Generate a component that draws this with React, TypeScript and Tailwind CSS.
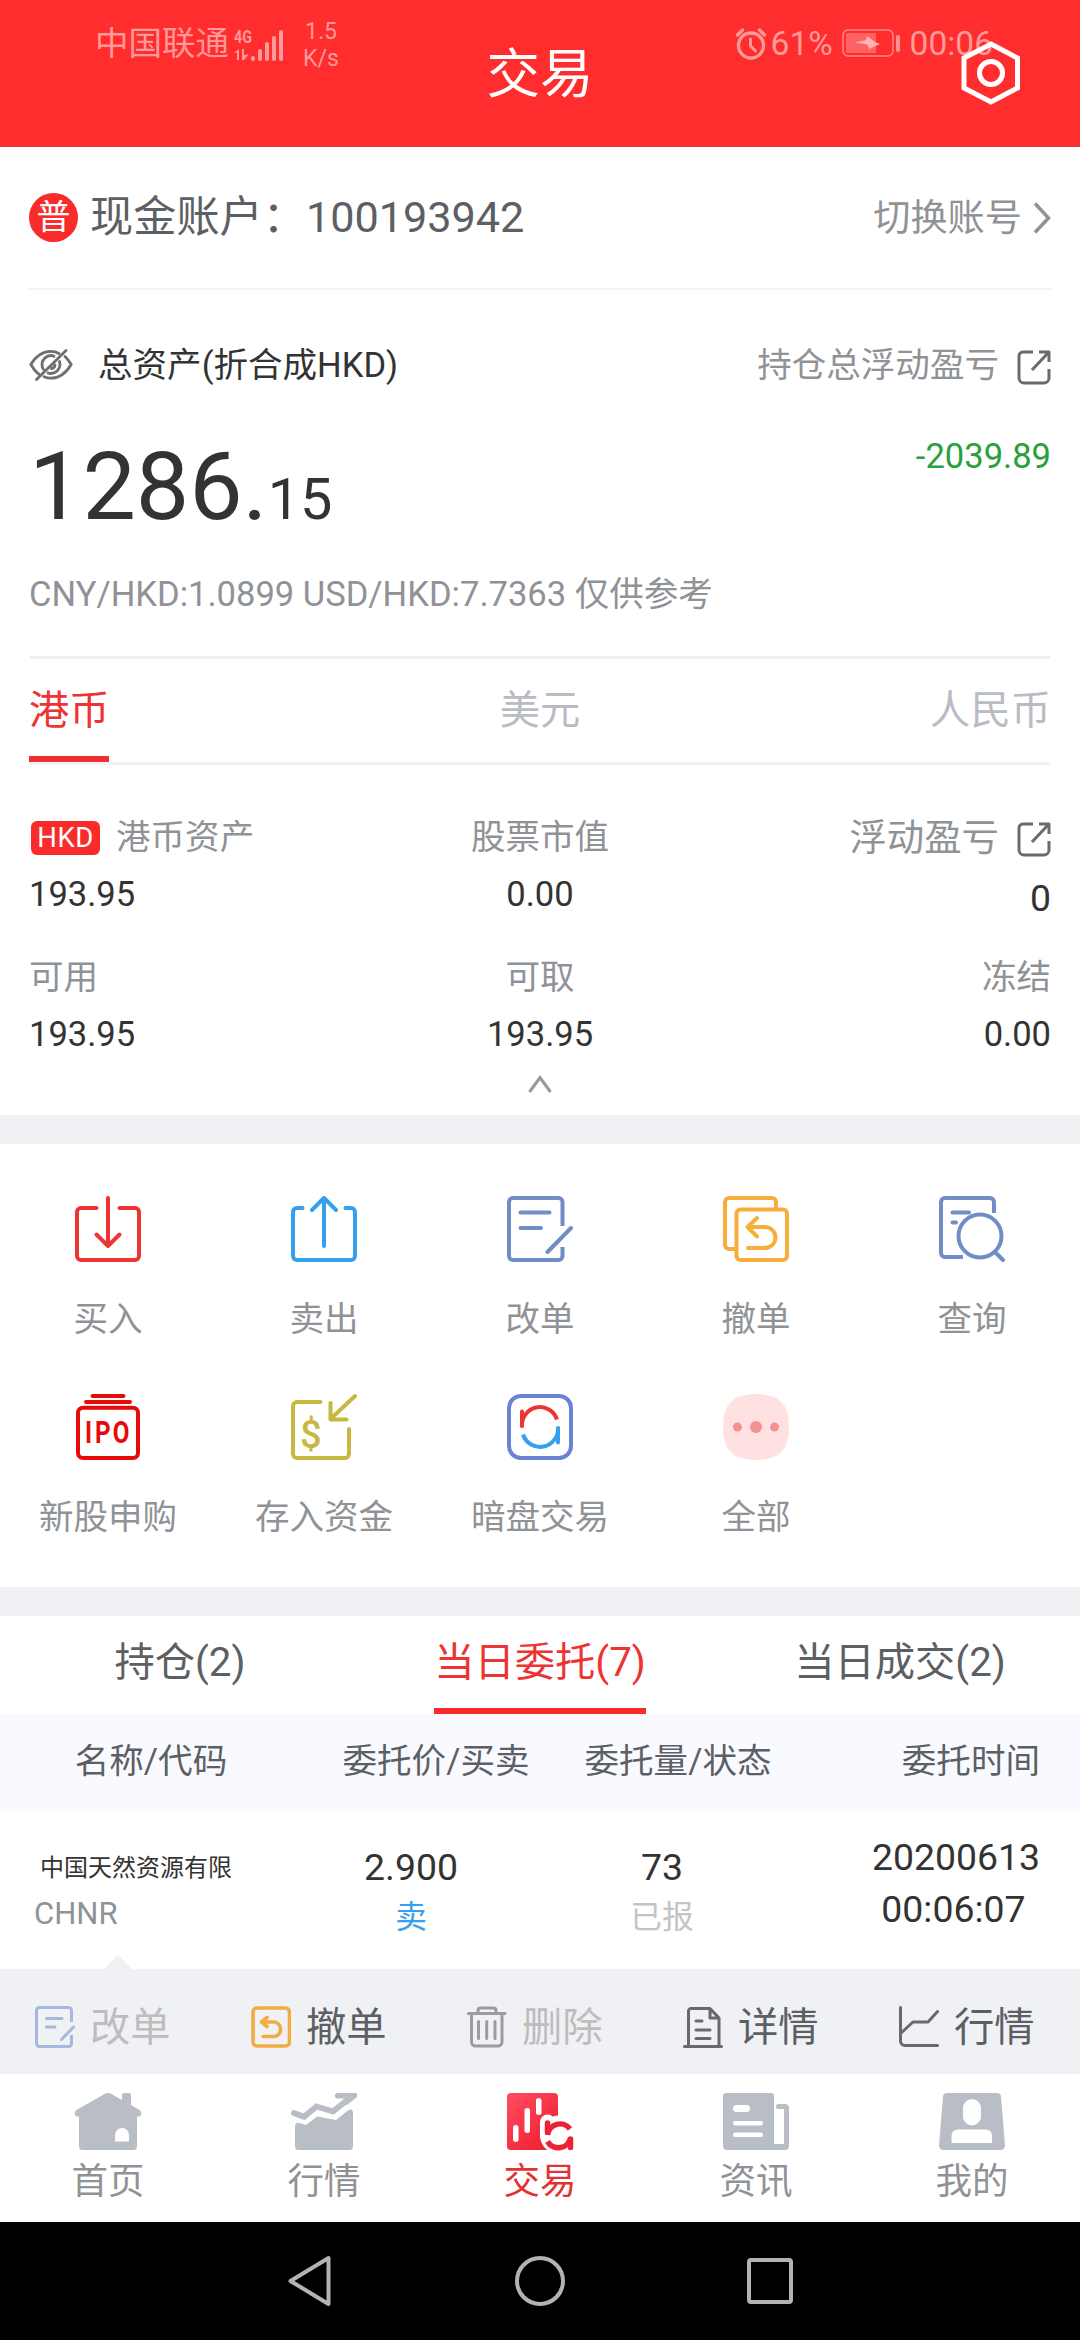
import { useState } from "react";
import type { ReactNode } from "react";

/* ---------- small icons ---------- */

function ShareIcon() {
  return (
    <svg width="34" height="35" viewBox="0 0 34 35" fill="none" stroke="#6b6b6b" strokeWidth="3">
      <path d="M16 2H6a4 4 0 0 0-4 4v22a5 5 0 0 0 5 5h20a5 5 0 0 0 5-5V19" />
      <path d="M22 2h10v10M31.500 2.500 15 20" strokeLinejoin="round" />
    </svg>
  );
}

function EyeOffIcon() {
  return (
    <svg width="44" height="32" viewBox="0 0 44 32" fill="none" stroke="#6f6f6f" strokeWidth="2.800" strokeLinecap="round">
      <path d="M30 4.500C27.500 3 25 2.300 22 2.300 13 2.300 6 8.500 1.800 15.500c2.200 4 5 7.300 8.200 9.800" />
      <path d="M15 27.800c2.200.900 4.500 1.400 7 1.400 9 0 16-6.700 20.200-13.700-1.700-3-3.800-5.700-6.200-8" />
      <path d="M37 1.500 7.500 30.500" />
      <path d="M25 7.300c-1-.500-2-.800-3-.800a9 9 0 0 0-9 9c0 1.900.500 3.500 1.400 4.800" />
      <path d="M19 24c1 .400 2 .500 3 .500a9 9 0 0 0 9-9c0-1-.200-2-.500-3" />
      <path d="M22.500 19.500a4 4 0 0 0 3.500-3.500" />
    </svg>
  );
}

function SignalIcon() {
  return (
    <svg width="52" height="40" viewBox="0 -4 52 40" fill="#ff9a9a" className="overflow-visible">
      <text x="0" y="15" fontSize="18" fontWeight="700" textLength="18" lengthAdjust="spacingAndGlyphs">
        4G
      </text>
      <path d="M5 21v11H3v-7H0zM8 21h2v6l5-1-5 6H8z" />
      <rect x="17" y="28" width="4" height="5" rx="2" />
      <rect x="24" y="21" width="4" height="12" rx="2" />
      <rect x="31" y="14" width="4" height="19" rx="2" />
      <rect x="38" y="8" width="4" height="25" rx="2" />
      <rect x="45" y="2" width="4" height="31" rx="2" />
    </svg>
  );
}

function AlarmIcon() {
  return (
    <svg width="32" height="34" viewBox="0 0 32 34" fill="none" stroke="#ff9a9a" strokeLinecap="round">
      <circle cx="16" cy="18.500" r="12.500" strokeWidth="3.400" />
      <path d="M15.500 12v7l5 5" strokeWidth="3" />
      <path d="M2.500 8 7.500 3M29.500 8l-5-5" strokeWidth="3.400" />
    </svg>
  );
}

function BatteryIcon() {
  return (
    <svg width="60" height="28" viewBox="0 0 60 28">
      <rect x="1" y="1" width="50" height="26" rx="5" fill="none" stroke="#ff8a8a" strokeWidth="1.500" />
      <rect x="4" y="4" width="30" height="20" fill="#ff6262" />
      <path d="M13 13.500 24 11l1-4 8 6 5 2-11 5-1.500-4.500z" fill="#ffb4b4" />
      <rect x="54" y="6" width="4" height="17" rx="2" fill="#ff8f8f" />
    </svg>
  );
}

/* ---------- menu icons ---------- */

function Icon({ color, children }: { color: string; children: ReactNode }) {
  return (
    <svg
      width="66"
      height="66"
      viewBox="0 0 66 66"
      fill="none"
      stroke={color}
      strokeWidth="4"
      strokeLinecap="round"
      strokeLinejoin="round"
    >
      {children}
    </svg>
  );
}

const BuyIcon = (
  <Icon color="#ee3333">
    <path d="M21.500 12H6a4 4 0 0 0-4 4v44a4 4 0 0 0 4 4h54a4 4 0 0 0 4-4V16a4 4 0 0 0-4-4H44.500" />
    <path d="M33 2v48M21.500 38.500 33 50l11.500-11.500" />
  </Icon>
);

const SellIcon = (
  <Icon color="#36a0ee">
    <path d="M11.500 12H6a4 4 0 0 0-4 4v44a4 4 0 0 0 4 4h54a4 4 0 0 0 4-4V16a4 4 0 0 0-4-4h-5.500" />
    <path d="M33 50V2M21 14 33 2l12 12" />
  </Icon>
);

const EditIcon = (
  <Icon color="#718dc6">
    <path d="M55.500 30V6a4 4 0 0 0-4-4H6a4 4 0 0 0-4 4v54a4 4 0 0 0 4 4h45.500a4 4 0 0 0 4-4v-9" strokeLinecap="butt" />
    <path d="M13.500 16.500h29M13.500 32H34M64 32 40.500 56" />
  </Icon>
);

const CancelIcon = (
  <Icon color="#f7ad3b">
    <path d="M12 53H6a4 4 0 0 1-4-4V6a4 4 0 0 1 4-4h43a4 4 0 0 1 4 4v6" strokeLinecap="butt" />
    <rect x="13.500" y="13.500" width="50.500" height="50.500" rx="4" />
    <path d="M34 22 24.500 31 34 40.500M25 31h17a10.500 10.500 0 0 1 0 21H25" />
  </Icon>
);

const QueryIcon = (
  <Icon color="#718dc6">
    <path d="M55 17V6a4 4 0 0 0-4-4H6a4 4 0 0 0-4 4v51a4 4 0 0 0 4 4h18" strokeLinecap="butt" />
    <circle cx="41" cy="40" r="21.500" />
    <path d="M57 57l7 7M13.500 16.500H30M13.500 26.500H17" />
  </Icon>
);

const IpoIcon = (
  <Icon color="#e60b0b">
    <path d="M17.500 2h31M11 8h44" />
    <rect x="3" y="13.700" width="60" height="50.300" rx="5" />
    <text x="12.800 25.600 48.300" y="49" fontSize="31" fontWeight="700" fill="#e60b0b" stroke="none" transform="scale(0.78 1)">
      IPO
    </text>
  </Icon>
);

const DepositIcon = (
  <Icon color="#c7b842">
    <path d="M29.500 8H6a4 4 0 0 0-4 4v48a4 4 0 0 0 4 4h48a4 4 0 0 0 4-4V35" />
    <path d="M64 2 39.500 25M39.500 9v16.500H55.500" />
    <text x="9" y="54" fontSize="38" fontWeight="500" fill="#c7b842" stroke="none">
      $
    </text>
  </Icon>
);

const DarkPoolIcon = (
  <Icon color="#6a83d4">
    <rect x="2" y="2" width="62" height="62" rx="12" />
    <path d="M15 17.500V32" stroke="#ee3333" />
    <path d="M15 33a18 18 0 0 1 35-7.500" stroke="#ee3333" strokeLinecap="butt" />
    <path d="M51 34v14.500" stroke="#36a0ee" />
    <path d="M51 33a18 18 0 0 1-35 7.500" stroke="#36a0ee" strokeLinecap="butt" />
  </Icon>
);

const AllIcon = (
  <svg width="66" height="66" viewBox="0 0 66 66">
    <path d="M33 0c22 0 33 9 33 33S55 66 33 66 0 57 0 33 11 0 33 0z" fill="#ffe1e1" />
    <g fill="#f59191">
      <circle cx="14.500" cy="33" r="4.500" />
      <circle cx="33" cy="33" r="6" />
      <circle cx="51.500" cy="33" r="4.500" />
    </g>
  </svg>
);

const menu = [
  { label: "买入", icon: BuyIcon },
  { label: "卖出", icon: SellIcon },
  { label: "改单", icon: EditIcon },
  { label: "撤单", icon: CancelIcon },
  { label: "查询", icon: QueryIcon },
  { label: "新股申购", icon: IpoIcon },
  { label: "存入资金", icon: DepositIcon },
  { label: "暗盘交易", icon: DarkPoolIcon },
  { label: "全部", icon: AllIcon },
];

/* ---------- order action icons ---------- */

function ActionIcon({ color, children }: { color: string; children: ReactNode }) {
  return (
    <svg
      width="40"
      height="42"
      viewBox="0 0 40 42"
      fill="none"
      stroke={color}
      strokeWidth="3"
      strokeLinecap="round"
      strokeLinejoin="round"
    >
      {children}
    </svg>
  );
}

const actions = [
  {
    label: "改单",
    disabled: true,
    icon: (
      <ActionIcon color="#a6b8dd">
        <path d="M36.500 16V4.500a3 3 0 0 0-3-3h-29a3 3 0 0 0-3 3v33a3 3 0 0 0 3 3h29a3 3 0 0 0 3-3V29" strokeLinecap="butt" />
        <path d="M11.500 12.500H27M11.500 21h8.500M38.500 21 26.500 33.500" />
      </ActionIcon>
    ),
  },
  {
    label: "撤单",
    disabled: false,
    icon: (
      <ActionIcon color="#f1ad45">
        <rect x="2" y="2" width="36.500" height="38" rx="4" strokeWidth="3.600" />
        <path d="M16 11.500 10.500 16 16 20.500M11 16h13a7.500 7.500 0 0 1 0 14.500H12" strokeWidth="3.600" />
      </ActionIcon>
    ),
  },
  {
    label: "删除",
    disabled: true,
    icon: (
      <ActionIcon color="#9c9c9c">
        <path d="M1.500 7.500h36.500M11 7V4.500a2.500 2.500 0 0 1 2.500-2.500h13A2.500 2.500 0 0 1 29 4.500V7" />
        <path d="M4.500 8v28a4 4 0 0 0 4 4h22.500a4 4 0 0 0 4-4V8M11.500 15.500v17M19.700 15.500v17M28 15.500v17" />
      </ActionIcon>
    ),
  },
  {
    label: "详情",
    disabled: false,
    icon: (
      <ActionIcon color="#696969">
        <path d="M1.500 40.500h37M5.500 40V5a2.500 2.500 0 0 1 2.500-2.500h19L36 12v28M27 3v9h8.500M13 15h6M13 24h14M13 32.500h14" />
      </ActionIcon>
    ),
  },
  {
    label: "行情",
    disabled: false,
    icon: (
      <ActionIcon color="#696969">
        <path d="M1.500 1.500V35a4.500 4.500 0 0 0 4.500 4.500h32.500M2 27l12-11h15L38.500 5.500" />
      </ActionIcon>
    ),
  },
];

/* ---------- bottom bar icons ---------- */

const tabs = [
  {
    label: "首页",
    icon: (
      <svg width="66" height="57" viewBox="0 0 66 57" fill="#b9bdc5">
        <path d="M29.500 1a7 7 0 0 1 7 0L47 7V2a2 2 0 0 1 2-2h5a2 2 0 0 1 2 2v10l8.500 5a3 3 0 0 1 1.500 2.500V21a2.500 2.500 0 0 1-2.500 2.500H62V53.500a3.500 3.500 0 0 1-3.500 3.500h-51A3.500 3.500 0 0 1 4 53.500v-30H2.500A2.500 2.500 0 0 1 0 21v-1.500A3 3 0 0 1 1.500 17z" />
        <path d="M40 48.500V42a7 7 0 0 1 14 0v6.500z" fill="#fff" />
      </svg>
    ),
  },
  {
    label: "行情",
    icon: (
      <svg width="66" height="57" viewBox="0 0 66 57" fill="#b9bdc5">
        <path d="M3 20l10 3.800L25.500 13.500 42 18.500 60 4" fill="none" stroke="#b9bdc5" strokeWidth="6" strokeLinecap="round" />
        <path d="M46 0h20v4L56 12l-5-2 4-4.500H46A2.800 2.800 0 0 1 46 0z" />
        <path d="M4 33a3 3 0 0 1 4-3l7 2 11-8.500 19 3.500 12.500-10q4.500-2 4.500 3V53.500a3.500 3.500 0 0 1-3.500 3.500h-51A3.500 3.500 0 0 1 4 53.500z" />
      </svg>
    ),
  },
  {
    label: "交易",
    icon: (
      <svg width="66" height="57" viewBox="0 0 66 57" className="overflow-visible">
        <defs>
          <linearGradient id="tradeFill" x1="0" y1="0" x2="0.800" y2="1">
            <stop offset="0" stopColor="#ff4d62" />
            <stop offset="1" stopColor="#f01f2e" />
          </linearGradient>
        </defs>
        <rect width="51" height="57" rx="4" fill="url(#tradeFill)" />
        <g fill="#fff">
          <rect x="6" y="32" width="5.500" height="17" rx="2.700" />
          <rect x="17.500" y="15" width="5.500" height="25" rx="2.700" />
          <rect x="29" y="5" width="5.500" height="17" rx="2.700" />
        </g>
        <g fill="none" stroke="#fff" strokeWidth="15">
          <path d="M40.500 29v13" strokeLinecap="round" />
          <circle cx="52.500" cy="42" r="12" fill="#fff" />
        </g>
        <g fill="none" stroke="#ea2434" strokeWidth="5.500">
          <path d="M40.500 30v9M63.500 46v8.500" strokeLinecap="round" />
          <path d="M40.500 42a12.500 12.500 0 0 1 22.500-6M63.500 45a12.500 12.500 0 0 1-23 3.500" />
        </g>
      </svg>
    ),
  },
  {
    label: "资讯",
    icon: (
      <svg width="66" height="57" viewBox="0 0 66 57" fill="#b9bdc5">
        <path d="M3 0h45a3 3 0 0 1 3 3v48h10V16h-5.500a2.500 2.500 0 0 1 0-5H62a4 4 0 0 1 4 4v38a4 4 0 0 1-4 4H4a4 4 0 0 1-4-4V3a3 3 0 0 1 3-3z" />
        <g fill="#fff">
          <rect x="10" y="12" width="17" height="7" rx="3.500" />
          <rect x="10" y="28" width="30" height="4.500" rx="2.200" />
          <rect x="10" y="39.500" width="30" height="4.500" rx="2.200" />
        </g>
      </svg>
    ),
  },
  {
    label: "我的",
    icon: (
      <svg width="66" height="57" viewBox="0 0 66 57" fill="#b9bdc5">
        <path d="M8 0h50a4 4 0 0 1 4 4l4 48.500a4.500 4.500 0 0 1-4.500 4.500h-57A4.500 4.500 0 0 1 0 52.500L4 4a4 4 0 0 1 4-4z" />
        <g fill="#fff">
          <rect x="24" y="6" width="18" height="26.500" rx="9" />
          <path d="M12.500 50v-7q0-6.500 7-6.500h27q6.500 0 6.500 6.500v7z" />
        </g>
      </svg>
    ),
  },
];

export default function App() {
  const [orderTab, setOrderTab] = useState(1);
  const orderTabs = ["持仓(2)", "当日委托(7)", "当日成交(2)"];

  return (
    <div className="w-[1080px] h-[2340px] flex flex-col overflow-hidden bg-white text-[#333333] font-['Roboto','Noto_Sans_CJK_SC',sans-serif]">
      {/* HEADER */}
      <header className="relative h-[147px] shrink-0 bg-[#ff2d2d] flex justify-center border-b border-[#c44343]">
        <h1 className="mt-[40px] h-[70px] leading-[70px] text-[53.5px] text-white">交易</h1>

        {/* system status bar over the header */}
        <div className="absolute inset-x-0 top-0 h-[88px] flex items-center text-[#ff9a9a]">
          <span className="ml-[95px] text-[33.5px] leading-[40px]">中国联通</span>
          <span className="ml-[5px]">
            <SignalIcon />
          </span>
          <span className="ml-[15px] w-[40px] text-center text-[23px] leading-[27px] mt-[1px]">
            1.5
            <br />
            K/s
          </span>
          <span className="ml-auto">
            <AlarmIcon />
          </span>
          <span className="ml-[4px] w-[66px] text-[33.5px] leading-[40px]">61%</span>
          <span className="ml-[5px] mt-[-2px]">
            <BatteryIcon />
          </span>
          <span className="ml-[8px] mr-[87px] text-[33.5px] leading-[40px]">00:06</span>
        </div>

        <svg className="absolute left-[960px] top-[40px]" width="62" height="66" viewBox="0 0 62 66" fill="none" stroke="#fff" strokeWidth="5">
          <path d="M31 4 57.500 18v30L31 62 4 48V18z" />
          <circle cx="31" cy="33" r="11.500" />
        </svg>
      </header>

      {/* ACCOUNT */}
      <section className="px-[29px]">
        <div className="h-[143px] flex items-center border-b-2 border-[#f1f4f5]">
          <span className="size-[49px] rounded-full bg-[#f92b2b] text-white text-[34px] leading-[48px] text-center">普</span>
          <span className="ml-[12px] text-[43.2px] leading-[60px] text-[#5c5f63]">现金账户：100193942</span>
          <span className="ml-auto text-[37.2px] leading-[60px] text-[#8f9296]">切换账号</span>
          <svg className="ml-[11px]" width="18" height="32" viewBox="0 0 18 32" fill="none" stroke="#8f9296" strokeWidth="3.500">
            <path d="M2 1.500 15.500 16 2 30.500" />
          </svg>
        </div>

        <div className="h-[150px] flex items-center">
          <EyeOffIcon />
          <span className="ml-[25px] text-[34.56px] leading-[50px]">总资产(折合成HKD)</span>
          <span className="ml-auto mr-[18px] text-[34.56px] leading-[50px] text-[#8f9296]">持仓总浮动盈亏</span>
          <span className="mt-[4px]">
            <ShareIcon />
          </span>
        </div>

        <div className="h-[93px] flex justify-between">
          <div className="text-[95px] leading-[93px]">
            1286.<span className="text-[57.6px]">15</span>
          </div>
          <div className="h-[32px] leading-[32px] text-[34.56px] text-[#28a03c]">-2039.89</div>
        </div>

        <div className="h-[126px] leading-[123px] border-b-3 border-[#f0f1f5] text-[34.56px] text-[#8f9296]">
          CNY/HKD:1.0899 USD/HKD:7.7363 仅供参考
        </div>

        {/* currency tabs */}
        <div className="h-[106px] grid grid-cols-3 border-b-3 border-[#f0f1f5] text-[40.3px] leading-[103px] text-[#b9bcc2]">
          <div>
            <div className="w-[80px] h-[103px] whitespace-nowrap border-b-6 border-[#f22e2e] text-[#ee3333]">港币</div>
          </div>
          <div className="text-center">美元</div>
          <div className="text-right">人民币</div>
        </div>

        {/* HKD assets */}
        <div className="pt-[45px] grid grid-cols-3 text-[34.56px] leading-[56px]">
          <div className="h-[140px]">
            <div className="h-[56px] leading-[54px] flex items-center text-[#8f9296]">
              <span className="ml-[2px] mr-[16px] w-[69px] h-[34px] rounded-[6px] bg-[#f92b2b] text-white text-center text-[27.5px] tracking-[0.5px] leading-[34px]">
                HKD
              </span>
              <span className="mt-[-2px]">港币资产</span>
            </div>
            <div>193.95</div>
          </div>
          <div className="h-[140px] text-center">
            <div className="h-[56px] leading-[54px] text-[#8f9296]">股票市值</div>
            <div>0.00</div>
          </div>
          <div className="h-[140px] text-right text-[37.4px]">
            <div className="h-[58px] leading-[56px] flex items-center justify-end gap-[18px] text-[#8f9296]">
              <span className="mt-[-2px]">浮动盈亏</span>
              <ShareIcon />
            </div>
            <div className="leading-[60px]">0</div>
          </div>
          <div>
            <div className="h-[56px] leading-[54px] text-[#8f9296]">可用</div>
            <div>193.95</div>
          </div>
          <div className="text-center">
            <div className="h-[56px] leading-[54px] text-[#8f9296]">可取</div>
            <div>193.95</div>
          </div>
          <div className="text-right">
            <div className="h-[56px] leading-[54px] text-[#8f9296]">冻结</div>
            <div>0.00</div>
          </div>
        </div>

        <div className="h-[53px] pt-[13px] flex justify-center">
          <svg width="24" height="18" viewBox="0 0 24 18" fill="none" stroke="#999" strokeWidth="3">
            <path d="M1.500 17 12 2.500 22.500 17" />
          </svg>
        </div>
      </section>

      <div className="h-[29px] shrink-0 bg-[#f0f1f5]" />

      {/* MENU */}
      <section className="h-[443px] shrink-0 pt-[52px] grid grid-cols-5 auto-rows-[198px]">
        {menu.map((item) => (
          <div key={item.label} className="flex flex-col items-center">
            {item.icon}
            <span className="mt-[32px] text-[34.56px] leading-[50px] text-[#8f9296]">{item.label}</span>
          </div>
        ))}
      </section>

      <div className="h-[29px] shrink-0 bg-[#f0f1f5]" />

      {/* ORDERS */}
      <section>
        <div className="h-[98px] grid grid-cols-3 justify-items-center text-[40.3px] leading-[90px] text-[#5c5f63]">
          {orderTabs.map((label, i) => (
            <button
              key={label}
              onClick={() => setOrderTab(i)}
              className={i === orderTab ? "w-[212px] pt-[2px] border-b-6 border-[#f92b2b] text-[#ee3333]" : "pt-[2px] border-b-6 border-transparent"}
            >
              {label}
            </button>
          ))}
        </div>

        <div className="h-[97px] flex bg-[#f9faff] text-[34.56px] leading-[94px] text-[#5c5f63] text-center">
          <span className="w-[302px]">名称/代码</span>
          <span className="w-[268px]">委托价/买卖</span>
          <span className="w-[216px]">委托量/状态</span>
          <span className="flex-1 pr-[40px] text-right">委托时间</span>
        </div>

        <div className="relative h-[158px] flex">
          <div className="w-[274px] pt-[35px] pl-[34px]">
            <div className="pl-[6px] text-[24px] leading-[45px]">中国天然资源有限</div>
            <div className="text-[31px] leading-[45px] text-[#8f9296]">CHNR</div>
          </div>
          <div className="w-[274px] pt-[31px] text-center">
            <div className="text-[37.4px] leading-[51px]">2.900</div>
            <div className="text-[31.7px] leading-[50px] text-[#36a0ee]">卖</div>
          </div>
          <div className="w-[228px] pt-[31px] text-center">
            <div className="text-[37.4px] leading-[51px]">73</div>
            <div className="text-[31.7px] leading-[50px] text-[#c4c4c4]">已报</div>
          </div>
          <div className="flex-1 pt-[20px] pr-[40px] flex justify-end text-center text-[37.4px] leading-[52px]">
            <div>
              20200613
              <br />
              <span className="mr-[5px]">00:06:07</span>
            </div>
          </div>
          <svg className="absolute left-[104px] bottom-0" width="28" height="14" viewBox="0 0 28 14" fill="#f0f1f5">
            <path d="M14 0l14 14H0z" />
          </svg>
        </div>

        <div className="h-[105px] grid grid-cols-5 bg-[#f0f1f5] pt-[11px]">
          {actions.map((a) => (
            <div key={a.label} className="h-[94px] pl-[35px] flex items-center text-[40.3px] leading-[94px]">
              {a.icon}
              <span className={a.disabled ? "ml-[15px] mt-[2px] text-[#bdbdbd]" : "ml-[15px] mt-[2px] text-[#5c5f63]"}>{a.label}</span>
            </div>
          ))}
        </div>
      </section>

      {/* BOTTOM TABS */}
      <nav className="h-[148px] shrink-0 pt-[19px] grid grid-cols-5">
        {tabs.map((t) => (
          <div key={t.label} className="flex flex-col items-center">
            {t.icon}
            <span className={t.label === "交易" ? "mt-[7px] text-[36.5px] leading-[50px] text-[#e23333]" : "mt-[7px] text-[36.5px] leading-[50px] text-[#8f9296]"}>
              {t.label}
            </span>
          </div>
        ))}
      </nav>

      {/* ANDROID NAV */}
      <div className="h-[118px] shrink-0 bg-black flex items-center justify-center gap-[182px]">
        <svg width="46" height="54" viewBox="0 0 46 54" fill="none" stroke="#b3b3b3" strokeWidth="4" strokeLinejoin="round">
          <path d="M41.500 4v46L3.500 27z" />
        </svg>
        <svg width="50" height="50" viewBox="0 0 50 50" fill="none" stroke="#b3b3b3" strokeWidth="4">
          <circle cx="25" cy="25" r="23" />
        </svg>
        <svg width="46" height="46" viewBox="0 0 46 46" fill="none" stroke="#b3b3b3" strokeWidth="4">
          <rect x="2" y="2" width="42" height="42" rx="2" />
        </svg>
      </div>
    </div>
  );
}
